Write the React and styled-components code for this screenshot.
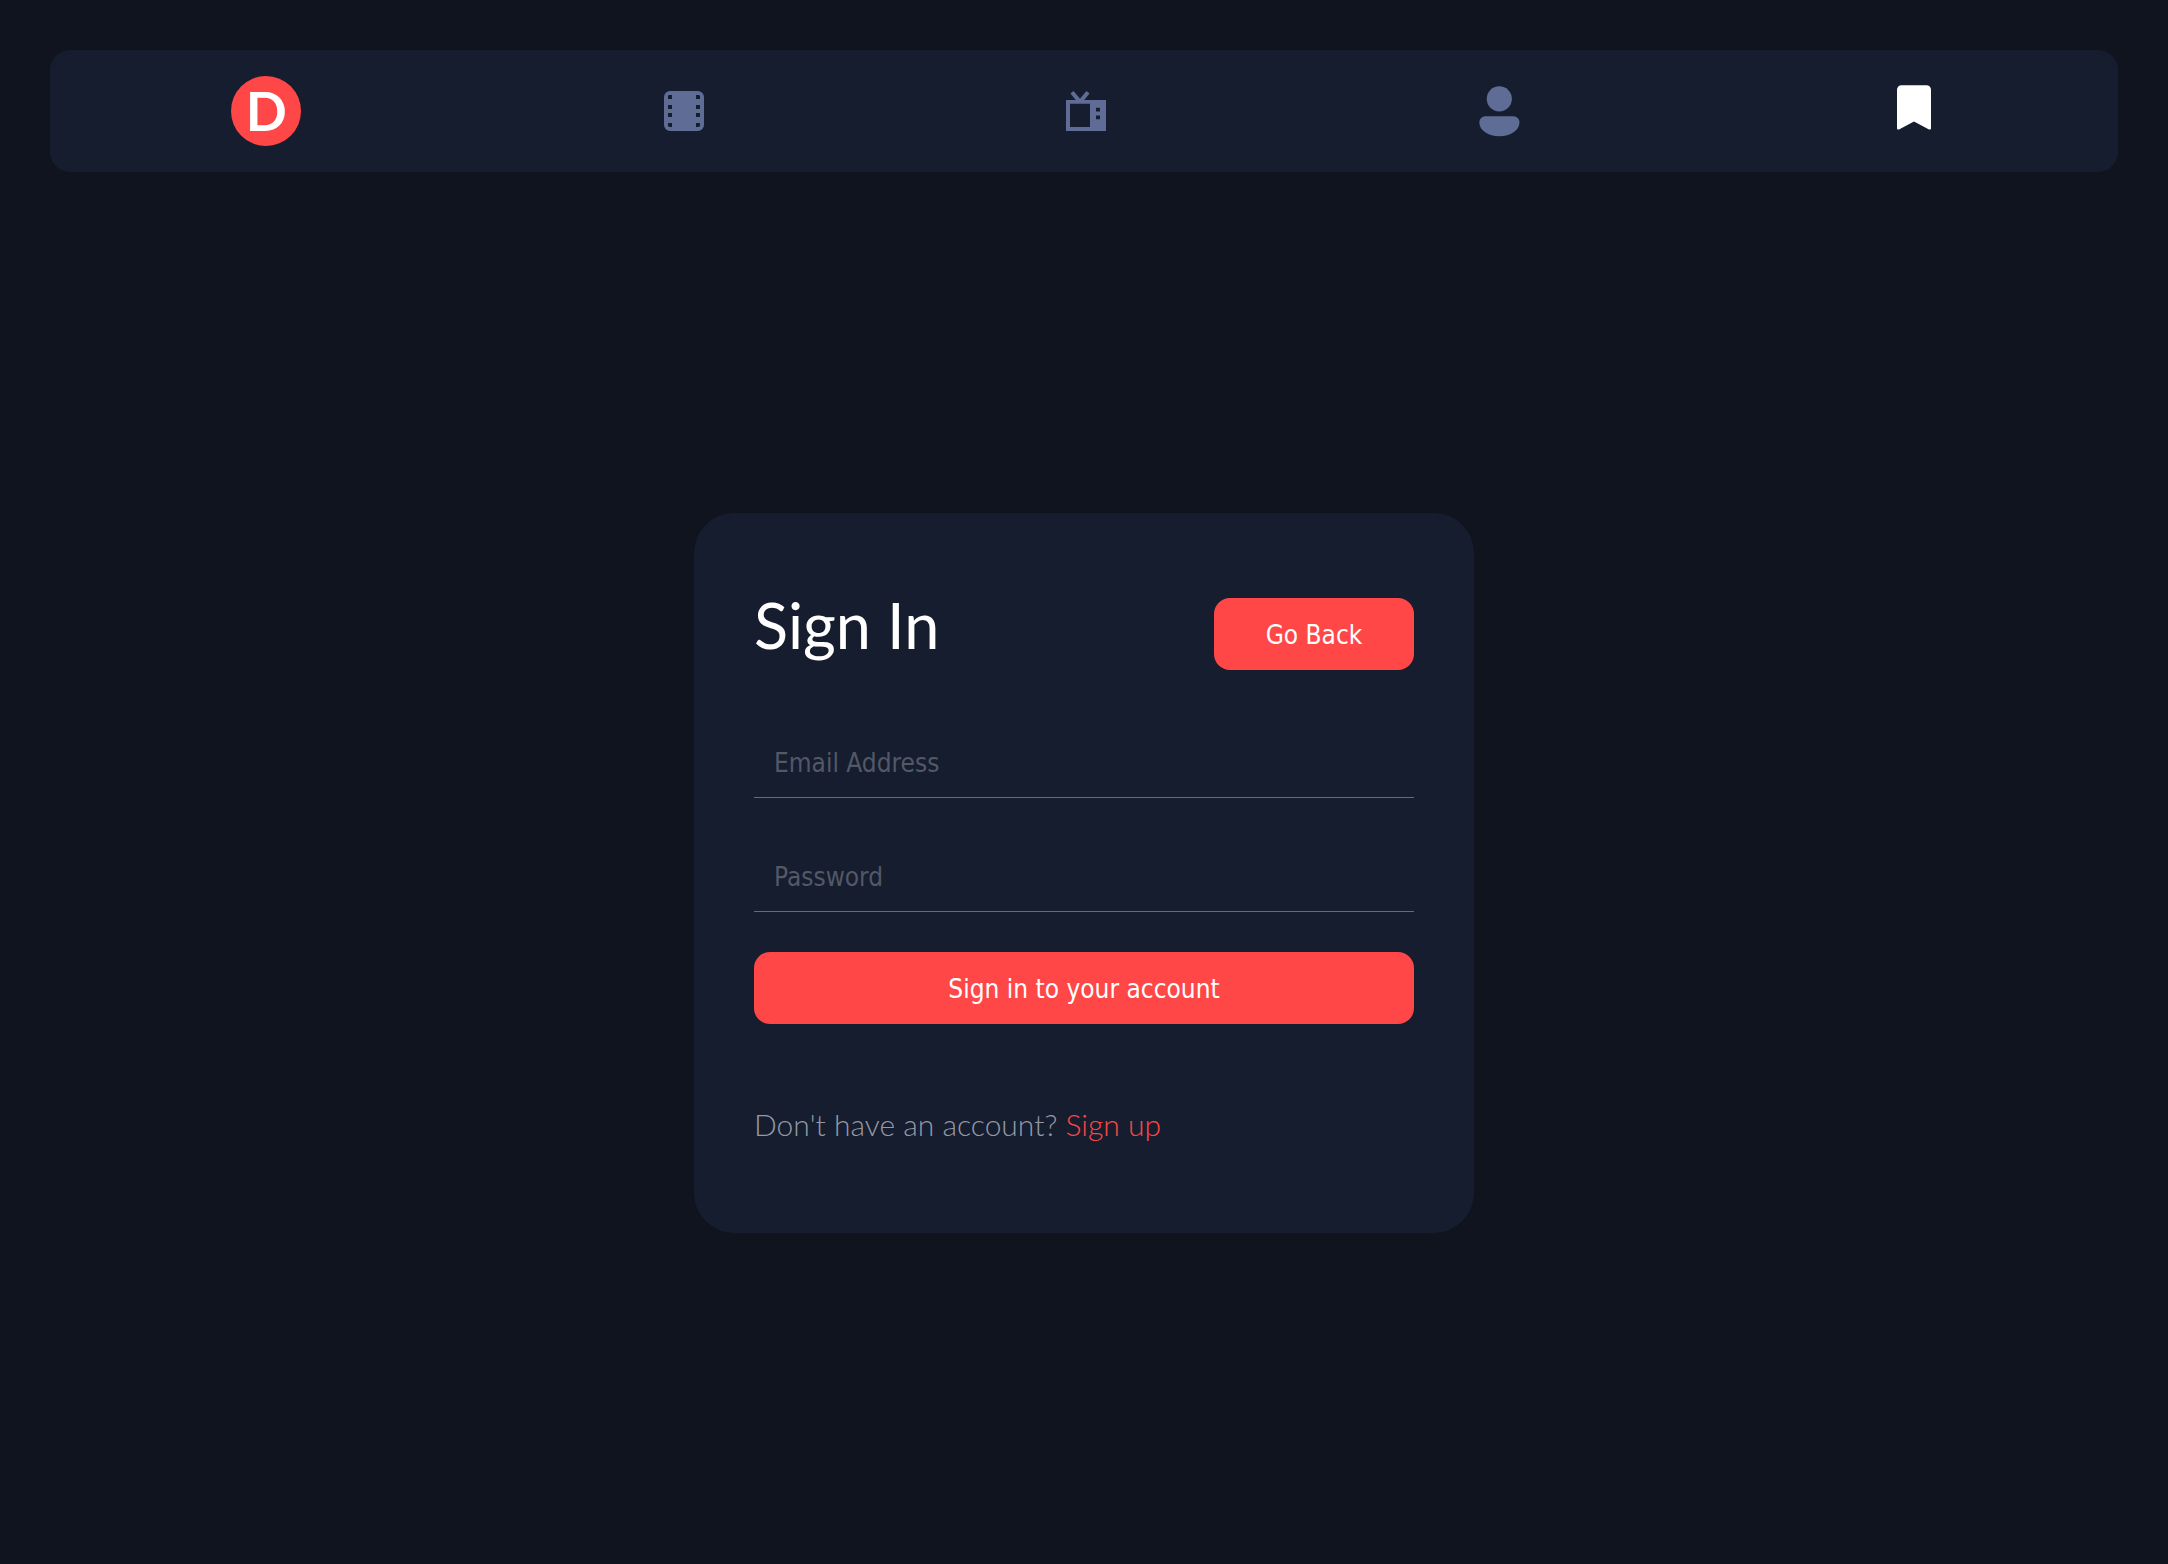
import styled, { createGlobalStyle } from "styled-components";

function App() {

    return (
        <>
            <GlobalStyle/>
            <Page>
                <Navbar/>
                <Main>
                    <SignInForm/>
                </Main>
            </Page>
        </>
    )
}

function Navbar() {
    return (
        <Nav aria-label="Main">
            <Logo href="#">D</Logo>
            <NavLink href="#movies" aria-label="Movies">
                <svg width="40" height="40" viewBox="0 0 20 20" fill="currentColor">
                    <path d="M16.956 0H3.044A3.044 3.044 0 0 0 0 3.044v13.912A3.044 3.044 0 0 0 3.044 20h13.912A3.044 3.044 0 0 0 20 16.956V3.044A3.044 3.044 0 0 0 16.956 0ZM4 9H2V7h2v2Zm-2 2h2v2H2v-2Zm16-2h-2V7h2v2Zm-2 2h2v2h-2v-2Zm2-8.26V4h-2V2h1.26a.74.74 0 0 1 .74.74ZM2.74 2H4v2H2V2.74A.74.74 0 0 1 2.74 2ZM2 17.26V16h2v2H2.74a.74.74 0 0 1-.74-.74Zm16 0a.74.74 0 0 1-.74.74H16v-2h2v1.26Z"/>
                </svg>
            </NavLink>
            <NavLink href="#series" aria-label="TV series">
                <svg width="40" height="40" viewBox="0 0 20 20" fill="currentColor">
                    <path d="M20 4.481H9.08l2.7-3.278L10.22.029 7 3.909 3.78.029 2.22 1.203l2.7 3.278H0V20h20V4.481Zm-8 13.58H2V6.42h10v11.64Zm5-3.88h-2v-1.94h2v1.94Zm0-3.88h-2V8.36h2v1.94Z"/>
                </svg>
            </NavLink>
            <NavLink href="#profile" aria-label="Profile">
                <svg width="62" height="62" viewBox="0 0 62 62" fill="currentColor">
                    <circle cx="31.3" cy="18.8" r="12.6"/>
                    <path d="M17.300 36.200h28.200a6 6 0 0 1 6 6c0 8.300-9 14-20.100 14S11.300 50.500 11.300 42.200a6 6 0 0 1 6-6Z"/>
                </svg>
            </NavLink>
            <NavLink href="#bookmarks" aria-label="Bookmarks" $active>
                <svg width="44" height="62" viewBox="0 0 44 62" fill="currentColor">
                    <path d="M8.500 5.200h25a4.500 4.500 0 0 1 4.500 4.500v38.600a1.300 1.300 0 0 1-2 1.100L21 41.500 6 49.400a1.300 1.300 0 0 1-2-1.100V9.700a4.500 4.500 0 0 1 4.500-4.500Z"/>
                </svg>
            </NavLink>
        </Nav>
    )
}

function SignInForm() {
    return (
        <Card>
            <Header>
                <Title>Sign In</Title>
                <BackButton type="button">Go Back</BackButton>
            </Header>
            <Form onSubmit={(e) => e.preventDefault()}>
                <Input type="email" placeholder="Email Address" aria-label="Email Address"/>
                <Input type="password" placeholder="Password" aria-label="Password"/>
                <Button type="submit">Sign in to your account</Button>
            </Form>
            <Paragraph>
                Don't have an account? <SignUpLink href="#signup">Sign up</SignUpLink>
            </Paragraph>
        </Card>
    )
}


const GlobalStyle = createGlobalStyle`
  * {
    box-sizing: border-box;
  }

  body {
    margin: 0;
    background: #10141e;
    color: white;
    font-family: Lato, sans-serif;
  }
`

const Page = styled.div`
  display: flex;
  flex-direction: column;
  min-height: 100vh;
`

const Nav = styled.nav`
  display: flex;
  align-items: center;
  justify-content: space-around;
  margin: 50px 50px 0;
  padding: 26px 0;
  border-radius: 20px;
  background: #161d2e;
`

const Logo = styled.a`
  display: flex;
  align-items: center;
  justify-content: center;
  width: 70px;
  height: 70px;
  border-radius: 50%;
  background: #ff4747;
  color: white;
  font-weight: 700;
  font-size: 54px;
  line-height: 70px;
  text-decoration: none;
`

const NavLink = styled.a`
  display: flex;
  color: ${({ $active }) => ($active ? "white" : "#5f6d96")};

  &:hover {
    color: #ff4747;
  }
`

const Main = styled.main`
  display: flex;
  flex: 1;
  align-items: center;
  justify-content: center;
  padding-top: 10px;
`

const Card = styled.section`
  width: 100%;
  max-width: 780px;
  padding: 85px 60px 91px;
  border-radius: 40px;
  background: #161d2e;
`

const Header = styled.div`
  display: flex;
  align-items: flex-start;
  justify-content: space-between;
  margin-bottom: 54px;
`

const Title = styled.h1`
  margin: 0;
  font-weight: 400;
  font-size: 63px;
  line-height: 54px;
`

const Form = styled.form`
  display: flex;
  flex-direction: column;
  gap: 40px;
`

const Input = styled.input`
  width: 100%;
  height: 74px;
  padding: 4px 20px 0;
  border: none;
  border-bottom: 1px solid #626991;
  outline: none;
  background: transparent;
  color: white;
  font-family: "DejaVu Sans Condensed", "DejaVu Sans", sans-serif;
  font-size: 26px;

  &::placeholder {
    color: #535867;
    opacity: 1;
  }

  &:focus {
    border-color: white;
  }
`

const Button = styled.button`
  height: 72px;
  padding: 2px 20px 0;
  border: none;
  border-radius: 16px;
  background: #ff4747;
  color: white;
  font-family: "DejaVu Sans Condensed", "DejaVu Sans", sans-serif;
  font-size: 26px;
  cursor: pointer;
`

const BackButton = styled(Button)`
  width: 200px;
`

const Paragraph = styled.p`
  margin: 82px 0 0;
  color: #9499a7;
  font-weight: 300;
  font-size: 30px;
  line-height: 36px;
`

const SignUpLink = styled.a`
  color: #ff4747;
  text-decoration: none;
`


export default App;
